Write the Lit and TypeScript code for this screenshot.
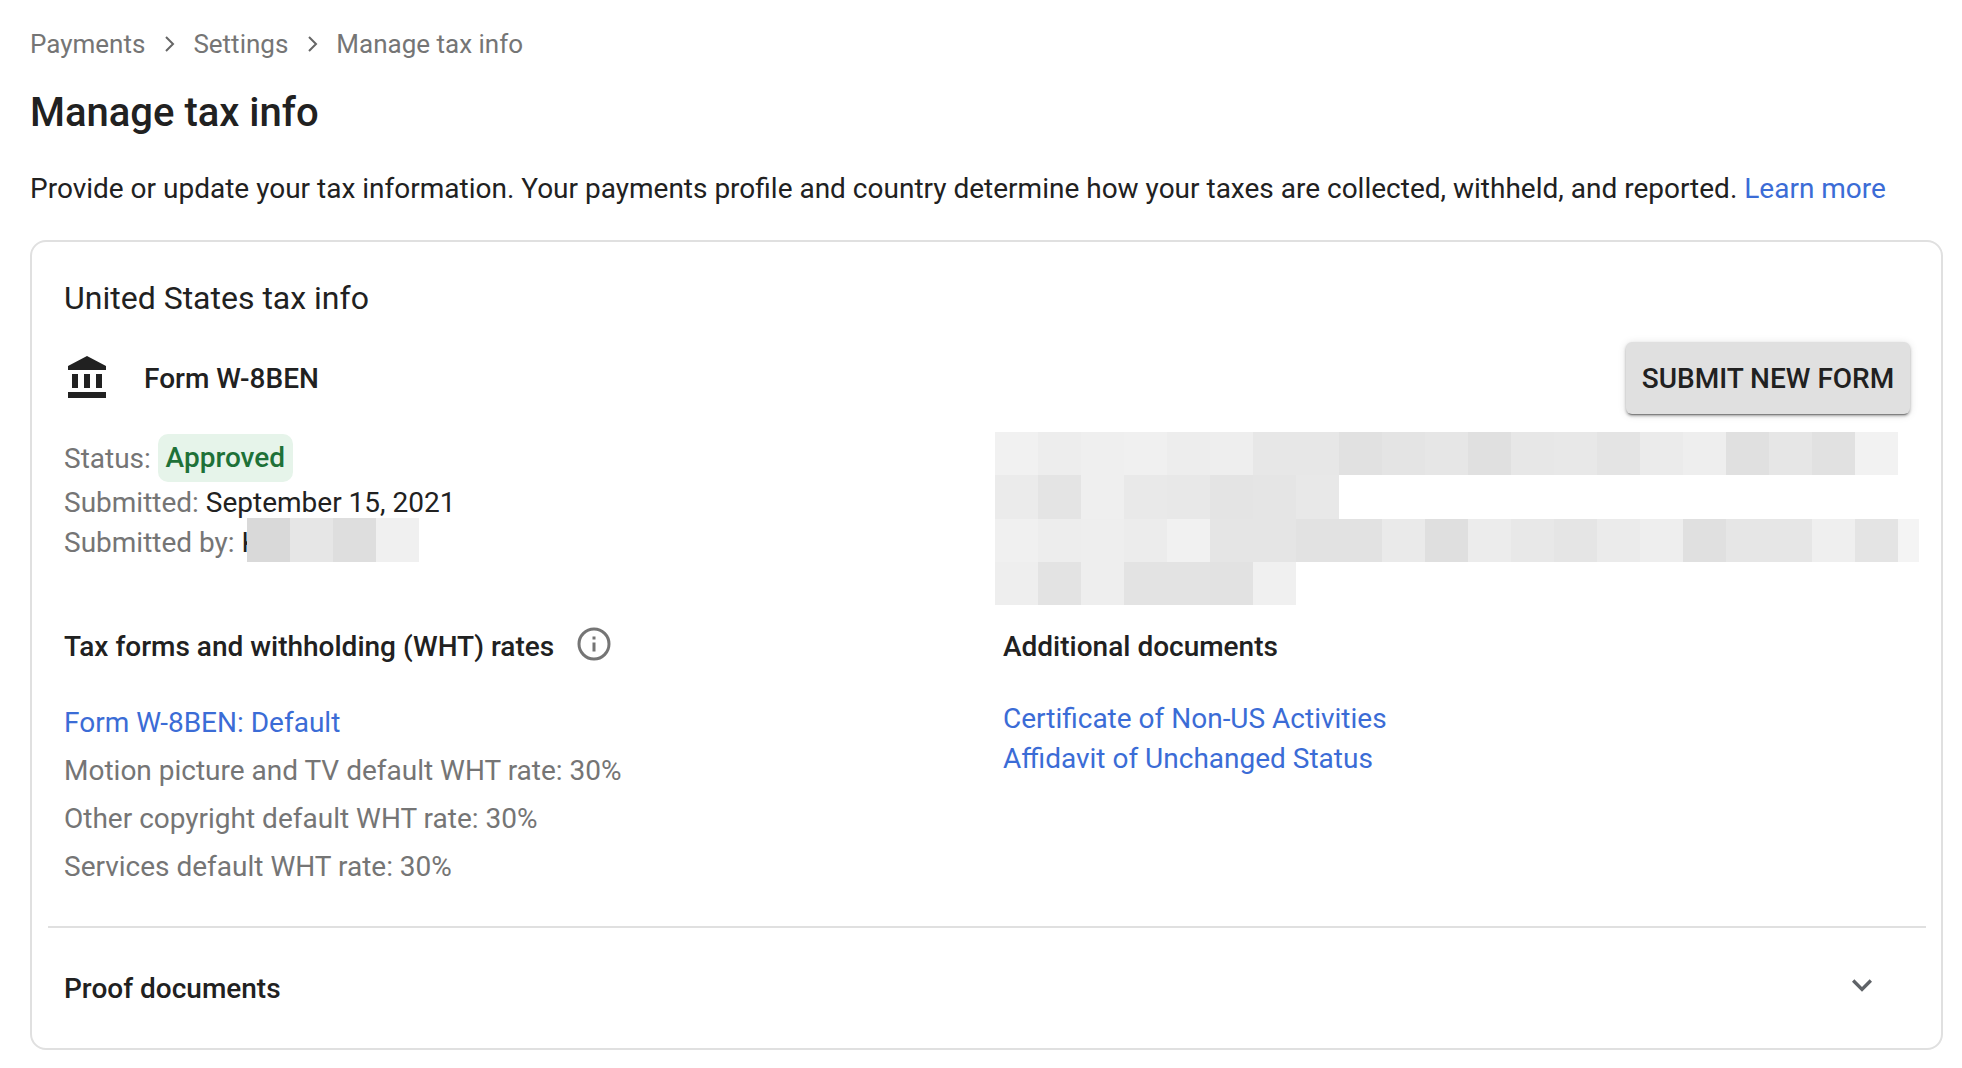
import { LitElement, html, css } from "lit";
import { customElement } from "lit/decorators.js";

const G = (xs: string[]) => xs.map((c) => "#" + c + c + c);
const ROWS = [
  G(["f1","ed","ef","f0","ed","ee","e7","e7","e1","e4","e6","e0","e7","e8","e4","eb","ee","e0","e6","e1","f2"]),
  G(["eb","e4","ef","e9","e8","e4","e5","e8"]),
  G(["f0","ed","ee","ec","f1","e5","e5","e2","e2","ea","df","ec","e8","e5","eb","ee","e0","e6","e6","ef","e4"]),
  G(["ee","e3","ee","e3","e3","e2","f0"]),
];
const NAME = G(["d9","e6","de","f0"]);

@customElement("app-root")
export class AppRoot extends LitElement {
  static styles = css`
    :host { display: block; background: #fff; min-height: 1068px; font-family: Roboto, sans-serif; color: #212121; font-size: 28px; }
    a { color: #3b6cd6; text-decoration: none; }
    .page { padding: 29px 19px 18px 30px; }
    .crumbs { display: flex; align-items: center; height: 30px; color: #757575; font-size: 26px; }
    .crumbs svg { width: 24px; height: 24px; margin: 0 12px; fill: none; stroke: #666; stroke-width: 2; }
    h1 { margin: 31px 0 0; font-size: 40px; line-height: 46px; font-weight: 500; color: #212121; }
    .intro { margin: 36px 0 0; line-height: 34px; font-size: 28px; white-space: nowrap; }
    .card { margin-top: 34px; border: 2px solid #e0e0e0; border-radius: 16px; height: 810px; box-sizing: border-box; padding: 0 15px 0 16px; }
    .inner { padding: 0 0 0 16px; }
    h2 { margin: 0; padding-top: 38px; font-weight: 400; font-size: 32px; line-height: 36px; }
    .form-row { display: flex; align-items: center; justify-content: space-between; margin-top: 26px; height: 72px; padding-right: 16px; }
    .form-name { display: flex; align-items: center; gap: 32px; font-weight: 500; font-size: 28px; }
    .form-name svg { width: 48px; height: 48px; fill: #212121; display: block; }
    button { all: unset; box-sizing: border-box; width: 284px; height: 72px; text-align: center; background: #e0e0e0; border-radius: 6px; font-size: 28px; font-weight: 500; color: #212121; box-shadow: 0 3px 1px -2px rgba(0,0,0,.3), 0 2px 3px 0 rgba(0,0,0,.3), 0 1px 8px 0 rgba(0,0,0,.12); }
    .columns { display: grid; grid-template-columns: 931px 1fr; }
    .status { display: flex; flex-direction: column; margin-top: 20px; height: 130px; color: #757575; font-size: 28px; }
    .line { display: flex; align-items: center; height: 40px; white-space: pre; }
    .line.first { height: 48px; }
    .value { color: #212121; }
    .badge { margin-left: 7px; height: 48px; line-height: 48px; width: 135px; box-sizing: border-box; text-align: center; background: #e6f4ea; border-radius: 10px; color: #1e7138; font-weight: 500; }
    .clip { width: 5px; overflow: hidden; color: #212121; }
    .mosaic { display: flex; flex-direction: column; }
    .mosaic.cols { margin: 18px 0 0 0; }
    .mrow { display: flex; height: 43.25px; flex: none; }
    .cell { width: 43px; height: 100%; flex: none; }
    .cell.half { width: 21px; background: #f4f4f4; }
    .inline { margin: -5px 0 -1px; }
    .redact { margin-left: -8px; }
    .lists { display: grid; grid-template-columns: 939px 1fr; margin-top: 21px; }
    .heading { display: flex; align-items: center; gap: 22px; font-size: 28px; font-weight: 500; height: 40px; }
    .heading svg { width: 36px; height: 36px; display: block; margin-top: -5px; }
    .links { display: flex; flex-direction: column; font-size: 28px; margin-top: 33px; }
    .left-links a, .left-links span { line-height: 48px; }
    .left-links span { color: #757575; }
    .right-links a { line-height: 40px; }
    .divider { margin-top: 35px; height: 2px; background: #e0e0e0; }
    .proof { display: flex; justify-content: space-between; align-items: center; height: 120px; padding: 0 44px 0 16px; font-size: 28px; font-weight: 500; }
    .proof svg { width: 40px; height: 40px; margin-top: -7px; fill: #5f6368; display: block; }
  `;

  private cells(xs: string[]) {
    return xs.map((c) => html`<div class="cell" style="background:${c}"></div>`);
  }

  render() {
    const chev = html`<svg viewBox="0 0 24 24"><path d="M9 5l7 7-7 7"/></svg>`;
    return html`
      <div class="page">
        <nav class="crumbs">Payments${chev}Settings${chev}Manage tax info</nav>
        <h1>Manage tax info</h1>
        <p class="intro">Provide or update your tax information. Your payments profile and country determine how your taxes are collected, withheld, and reported. <a href="#">Learn more</a></p>
        <section class="card">
          <div class="inner">
            <h2>United States tax info</h2>
            <div class="form-row">
              <div class="form-name">
                <svg viewBox="0 0 24 24"><path d="M4 10v7h3v-7H4zm6 0v7h3v-7h-3zM2 22h19v-3H2v3zm14-12v7h3v-7h-3zm-4.5-9L2 6v2h19V6l-9.5-5z"/></svg>
                Form W-8BEN
              </div>
              <button>SUBMIT NEW FORM</button>
            </div>
            <div class="columns">
              <div class="status">
                <div class="line first">Status:<span class="badge">Approved</span></div>
                <div class="line">Submitted: <span class="value">September 15, 2021</span></div>
                <div class="line">Submitted by: <span class="clip">K</span><div class="mrow inline">${this.cells(NAME)}</div></div>
              </div>
              <div class="mosaic cols redact">
                ${ROWS.map((r, i) => html`<div class="mrow">${this.cells(r)}${i === 2 ? html`<div class="cell half"></div>` : ""}</div>`)}
              </div>
            </div>
            <div class="lists">
              <div>
                <div class="heading">Tax forms and withholding (WHT) rates
                  <svg viewBox="0 0 24 24" fill="none" stroke="#757575" stroke-width="2"><circle cx="12" cy="12" r="10"/><path d="M12 11v6M12 7v2"/></svg>
                </div>
                <div class="links left-links">
                  <a href="#">Form W-8BEN: Default</a>
                  <span>Motion picture and TV default WHT rate: 30%</span>
                  <span>Other copyright default WHT rate: 30%</span>
                  <span>Services default WHT rate: 30%</span>
                </div>
              </div>
              <div>
                <div class="heading">Additional documents</div>
                <div class="links right-links">
                  <a href="#">Certificate of Non-US Activities</a>
                  <a href="#">Affidavit of Unchanged Status</a>
                </div>
              </div>
            </div>
          </div>
          <div class="divider"></div>
          <div class="proof">Proof documents
            <svg viewBox="0 0 24 24"><path d="M16.59 8.59L12 13.17 7.41 8.59 6 10l6 6 6-6z"/></svg>
          </div>
        </section>
      </div>
    `;
  }
}
